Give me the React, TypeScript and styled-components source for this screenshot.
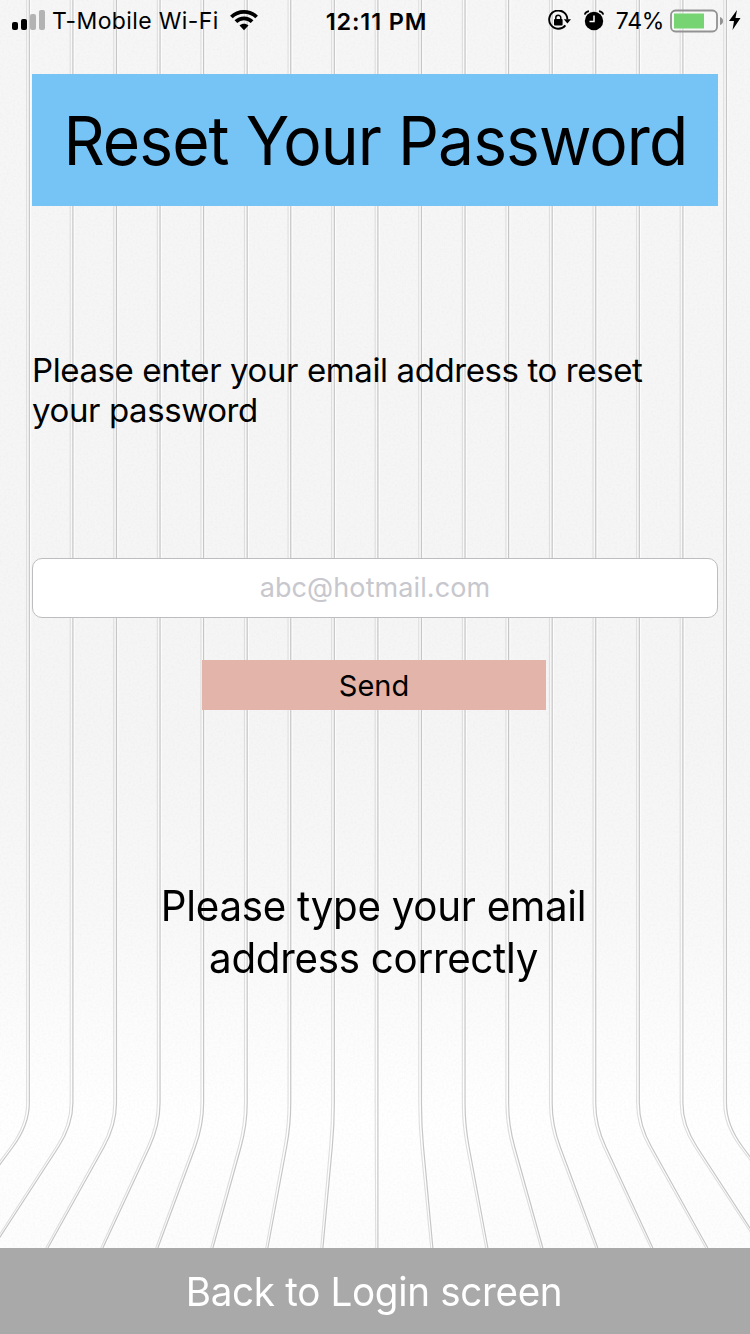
import React from "react";
import styled, { createGlobalStyle } from "styled-components";

const Global = createGlobalStyle`
  * { box-sizing: border-box; }
  body { margin: 0; background: #f3f3f3; font-family: Inter, "Liberation Sans", sans-serif; color: #000; }
`;
const Screen = styled.main`
  position: relative;
  isolation: isolate;
  width: 750px;
  height: 1334px;
  overflow: hidden;
  display: flex;
  flex-direction: column;
`;
const Backdrop = styled.svg`
  position: absolute;
  inset: 0;
  z-index: -1;
`;
const StatusBar = styled.header`
  display: grid;
  grid-template-columns: 1fr auto 1fr;
  align-items: center;
  height: 40px;
  padding: 2px 9px 0 12px;
  font-size: 23px;
`;
const StatusGroup = styled.div<{ $end?: boolean }>`
  display: flex;
  align-items: center;
  justify-content: ${(p) => (p.$end ? "flex-end" : "flex-start")};
  svg { display: block; flex: none; }
`;
const Carrier = styled.span`
  margin: 0 11px 0 6px;
  letter-spacing: 0.38px;
`;
const Clock = styled.time`
  font-size: 23.5px;
  font-weight: 600;
  letter-spacing: 0.85px;
`;
const AlarmSlot = styled.span`
  margin-left: 13px;
`;
const Percent = styled.span`
  margin: 0 6px 0 12px;
  letter-spacing: -0.3px;
`;
const BoltSlot = styled.span`
  margin-left: 5px;
`;
const Content = styled.section`
  flex: 1;
  display: flex;
  flex-direction: column;
  align-items: center;
  padding: 34px 32px 0;
`;
const Narrow = styled.span<{ $scale: number }>`
  display: inline-block;
  transform: scaleX(${(p) => p.$scale});
`;
const Title = styled.h1`
  display: flex;
  justify-content: center;
  width: 100%;
  height: 132px;
  margin: 0;
  background: #76c3f5;
  font-size: 67.5px;
  font-weight: 400;
  line-height: 134px;
  white-space: nowrap;
  letter-spacing: -1px;
`;
const Prompt = styled.p`
  width: 100%;
  margin: 144px 0 0;
  font-size: 33px;
  line-height: 40px;
  letter-spacing: -0.4px;
`;
const EmailField = styled.input`
  width: 686px;
  height: 60px;
  margin: 128px 0 0;
  padding: 0 0 2px;
  border: 1px solid #bdbdbf;
  border-radius: 10px;
  background: #fff;
  font: 400 27px Inter, sans-serif;
  letter-spacing: 0.1px;
  text-align: center;
  outline: none;
  &::placeholder { color: #c7c7cd; opacity: 1; }
`;
const SendButton = styled.button`
  width: 344px;
  height: 50px;
  margin: 42px 2px 0 0;
  padding: 0;
  border: 0;
  background: #e3b4aa;
  color: #000;
  font: 400 29px Inter, sans-serif;
`;
const Message = styled.p`
  margin: 170px 2px 0 0;
  font-size: 42px;
  line-height: 52px;
  letter-spacing: -0.3px;
  text-align: center;
`;
const BackButton = styled.button`
  height: 86px;
  border: 0;
  padding: 0 1px 0 0;
  background: #a9a9a9;
  color: #fff;
  font: 400 40px Inter, sans-serif;
  letter-spacing: -0.34px;
`;

const seams = Array.from({ length: 17 }, (_, i) => i - 8);

function seamPath(k: number, shift: number) {
  const x = 377.9 + k * 43.57 + shift;
  const bottom = 377.9 + k * 55 + shift * 0.8;
  const slope = (bottom - x) / 123;
  return `M${x} 0V1103Q${x} 1125 ${x + slope * 22} 1147L${bottom} 1248`;
}

function PlankBackdrop() {
  return (
    <Backdrop width="750" height="1334" viewBox="0 0 750 1334">
      <defs>
        <linearGradient id="wall" x1="0" y1="0" x2="0" y2="1">
          <stop offset="0" stopColor="#f6f6f6" />
          <stop offset="0.55" stopColor="#f5f5f5" />
          <stop offset="0.68" stopColor="#f8f8f8" />
          <stop offset="0.84" stopColor="#ffffff" />
          <stop offset="1" stopColor="#fbfbfb" />
        </linearGradient>
        <filter id="grain" x="0" y="0" width="100%" height="100%">
          <feTurbulence type="fractalNoise" baseFrequency="0.45" numOctaves="2" seed="4" />
          <feColorMatrix values="0 0 0 0 0.45  0 0 0 0 0.45  0 0 0 0 0.45  0.14 0 0 0 -0.055" />
        </filter>
      </defs>
      <rect width="750" height="1334" fill="url(#wall)" />
      <rect width="750" height="1334" filter="url(#grain)" />
      {seams.map((k) => (
        <g key={k} fill="none">
          <path d={seamPath(k, 1.2)} stroke="#fff" strokeWidth="1.4" opacity="0.7" />
          <path d={seamPath(k, -1.4)} stroke="#fff" strokeWidth="2" opacity="0.4" />
          <path d={seamPath(k, -2.7)} stroke="#dedede" strokeWidth="1.1" />
          <path d={seamPath(k, 0)} stroke="#c6c6c6" strokeWidth="1.2" />
        </g>
      ))}
    </Backdrop>
  );
}

function SignalIcon() {
  return (
    <svg width="34" height="22" viewBox="0 0 34 22">
      <rect x="0" y="12" width="6" height="8" rx="2" />
      <rect x="9" y="9" width="6" height="11" rx="2" />
      <rect x="18" y="4" width="6" height="16" rx="2" fill="#b3b3b3" />
      <rect x="27" y="0" width="6" height="20" rx="2" fill="#b3b3b3" />
    </svg>
  );
}

function WifiIcon() {
  return (
    <svg width="28" height="22" viewBox="0 0 28 22">
      <g fill="none" stroke="#000" strokeWidth="3.8">
        <path d="M1.4 7C8.2.2 19.8.2 26.6 7" />
        <path d="M5.9 11.6C10.4 7.2 17.6 7.2 22.1 11.6" />
      </g>
      <path d="M14 20.2L9.5 15.6C12 13.100 16 13.100 18.500 15.600Z" />
    </svg>
  );
}

function RotationLockIcon() {
  return (
    <svg width="23" height="22" viewBox="0 0 23 22">
      <path d="M17.4 15.3A9.100 9.100 0 1 1 19.400 9.500" fill="none" stroke="#000" strokeWidth="1.9" />
      <path d="M15.800 9.300H23L19.400 13.500Z" />
      <rect x="6" y="9" width="8.600" height="6.400" rx="1" />
      <path d="M7.800 9.500V7.700A2.500 2.500 0 0 1 12.800 7.700V9.500" fill="none" stroke="#000" strokeWidth="1.500" />
    </svg>
  );
}

function AlarmIcon() {
  return (
    <svg width="20" height="22" viewBox="0 0 20 22">
      <circle cx="10" cy="11" r="9.200" />
      <path d="M.7 4.600Q1.500 1.800 5 1.200M19.300 4.600Q18.500 1.800 15 1.200" fill="none" stroke="#000" strokeWidth="1.700" />
      <path d="M10 5.500V11.500H5.500" fill="none" stroke="#fff" strokeWidth="1.500" />
    </svg>
  );
}

function BatteryIcon() {
  return (
    <svg width="54" height="24" viewBox="0 0 54 24">
      <rect x="1" y="1.500" width="46" height="21" rx="4.500" fill="#fff" fillOpacity=".3" stroke="#929292" strokeWidth="1.800" />
      <rect x="4" y="4.500" width="30" height="15" fill="#76d572" />
      <path d="M50 8Q53 9 53 12T50 16Z" fill="#929292" />
    </svg>
  );
}

function BoltIcon() {
  return (
    <svg width="12" height="22" viewBox="0 0 12 22">
      <path d="M8 0L0 11H5L3.500 20L11.500 8H6.500Z" />
    </svg>
  );
}

export default function App() {
  return (
    <Screen>
      <Global />
      <PlankBackdrop />
      <StatusBar>
        <StatusGroup>
          <SignalIcon />
          <Carrier>T-Mobile Wi-Fi</Carrier>
          <WifiIcon />
        </StatusGroup>
        <Clock>12:11 PM</Clock>
        <StatusGroup $end>
          <RotationLockIcon />
          <AlarmSlot>
            <AlarmIcon />
          </AlarmSlot>
          <Percent>74%</Percent>
          <BatteryIcon />
          <BoltSlot>
            <BoltIcon />
          </BoltSlot>
        </StatusGroup>
      </StatusBar>
      <Content>
        <Title>
          <Narrow $scale={0.95}>Reset Your Password</Narrow>
        </Title>
        <Prompt>
          Please enter your email address to reset
          <br />
          your password
        </Prompt>
        <EmailField type="email" placeholder="abc@hotmail.com" />
        <SendButton type="button">Send</SendButton>
        <Message>
          <Narrow $scale={0.96}>
            Please type your email
            <br />
            address correctly
          </Narrow>
        </Message>
      </Content>
      <BackButton type="button">
        <Narrow $scale={0.965}>Back to Login screen</Narrow>
      </BackButton>
    </Screen>
  );
}
